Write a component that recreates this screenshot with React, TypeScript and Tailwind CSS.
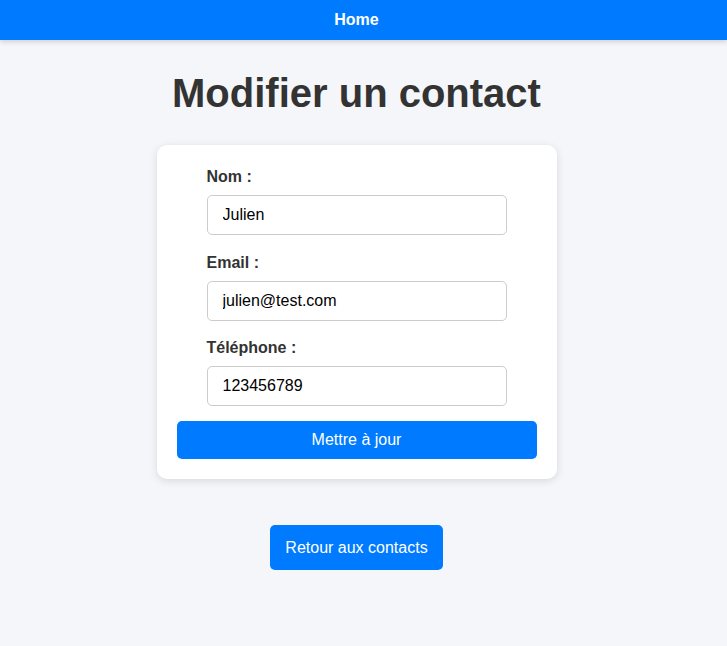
export default function App() {
  return (
    <div className="min-h-[646px] bg-[#f4f6f9] font-['Liberation_Sans',Arial,sans-serif] text-[#333]">
      <header className="flex h-10 items-center justify-center bg-[#007bff] pr-[14px] shadow-[0_2px_5px_rgba(0,0,0,0.15)]">
        <a href="#" className="text-base font-bold text-white">
          Home
        </a>
      </header>

      <main className="flex flex-col items-center pr-[14px]">
        <h1 className="mt-[30px] mb-[29px] text-[40px] leading-[46px] font-bold">Modifier un contact</h1>

        <form className="w-[400px] rounded-[10px] bg-white p-5 shadow-[0_2px_8px_rgba(0,0,0,0.12)]">
          <div className="mx-auto w-[300px]">
            <label className="mt-[3px] mb-[9px] block text-base leading-[18px] font-bold">Nom :</label>
            <input
              defaultValue="Julien"
              className="block h-10 w-full rounded-[5px] border border-[#ccc] px-[15px] text-base text-black outline-none"
            />
            <label className="mt-[19px] mb-[9px] block text-base leading-[18px] font-bold">Email :</label>
            <input
              defaultValue="julien@test.com"
              className="block h-10 w-full rounded-[5px] border border-[#ccc] px-[15px] text-base text-black outline-none"
            />
            <label className="mt-[18px] mb-[9px] block text-base leading-[18px] font-bold">Téléphone :</label>
            <input
              defaultValue="123456789"
              className="block h-10 w-full rounded-[5px] border border-[#ccc] px-[15px] text-base text-black outline-none"
            />
          </div>
          <button
            type="button"
            className="mt-[15px] block h-[38px] w-full rounded-[5px] bg-[#007bff] text-base text-white"
          >
            Mettre à jour
          </button>
        </form>

        <a
          href="#"
          className="mt-[46px] flex h-[45px] items-center rounded-[5px] bg-[#007bff] px-[15px] text-base text-white"
        >
          Retour aux contacts
        </a>
      </main>
    </div>
  );
}
